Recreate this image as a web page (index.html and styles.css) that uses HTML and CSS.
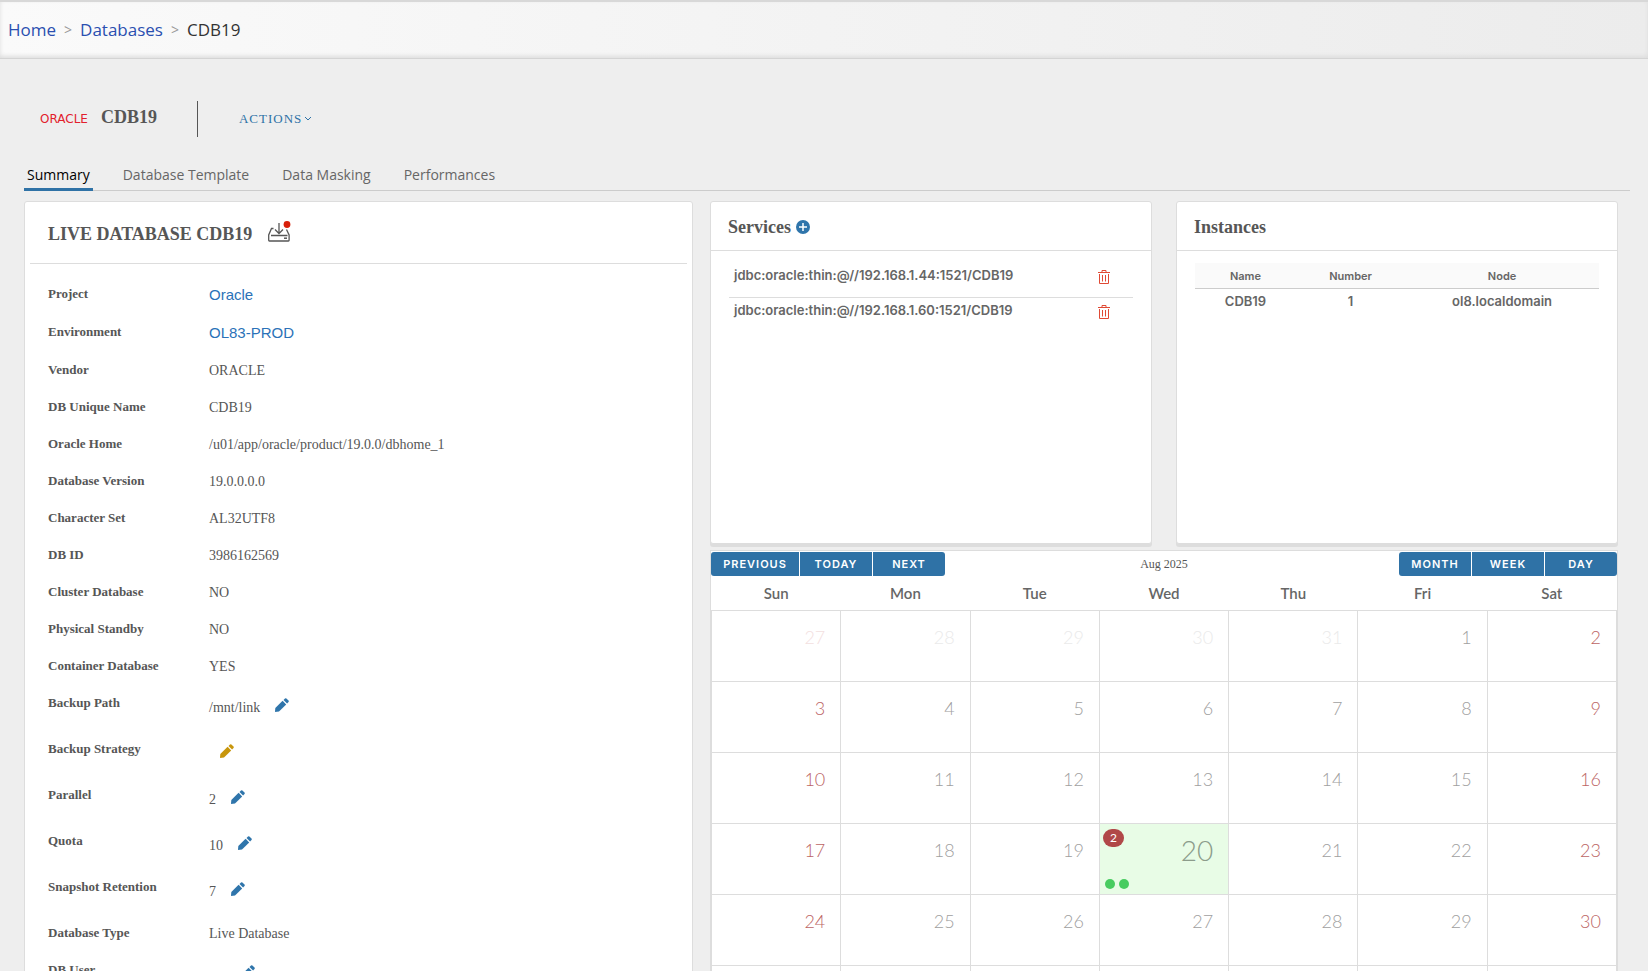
FILE: index.html
```
<!DOCTYPE html>
<html lang="en">
<head>
  <meta charset="UTF-8">
  <title>CDB19 - Databases</title>
  <link rel="stylesheet" href="styles.css">
</head>
<body>

  <!-- Shared icons -->
  <svg class="sprite" aria-hidden="true">
    <symbol id="pencil" viewBox="0 0 14 14">
      <path d="M0 14 L0.3 10 L7.6 2.8 L11.2 6.400 L4 13.500 Z"/>
      <path d="M8.500 1.900 L10 0.500 Q10.700 -0.200 11.400 0.500 L13.500 2.600 Q14.200 3.300 13.500 4 L12.100 5.500 Z"/>
    </symbol>
    <symbol id="trash" viewBox="0 0 12 14">
      <path d="M0 2.5h12M4 2.500v-2h4v2M1.500 4v9.500h9V4M4.500 5v6.500M7.500 5v6.500" fill="none" stroke="currentColor"/>
    </symbol>
  </svg>

  <nav class="breadcrumb">
    <a href="#">Home</a>
    <span class="sep">&gt;</span>
    <a href="#">Databases</a>
    <span class="sep">&gt;</span>
    <span class="current">CDB19</span>
  </nav>

  <header class="title-bar">
    <span class="logo">ORACLE</span>
    <h1>CDB19</h1>
    <button class="actions">ACTIONS<svg width="8" height="6" viewBox="0 0 8 6"><path d="M1 1l3 3 3-3" fill="none" stroke="currentColor"/></svg></button>
  </header>

  <div class="tabs" role="tablist">
    <button class="tab active" role="tab" aria-selected="true">Summary</button>
    <button class="tab" role="tab">Database Template</button>
    <button class="tab" role="tab">Data Masking</button>
    <button class="tab" role="tab">Performances</button>
  </div>

  <main class="content">

    <!-- Database details -->
    <section class="card details">
      <div class="details-head">
        <h2>LIVE DATABASE CDB19</h2>
        <svg width="24" height="22" viewBox="0 0 24 22" fill="none">
          <path d="M6.500 7.500H4.500L1.700 14v5.300q0 .7.700.7h19q.7 0 .7-.7V14L19.500 8.500M4 14.500h16.500" stroke="#565656" stroke-width="1.300"/>
          <path d="M12 2v10M8 8.500l4 4 4-4" stroke="#565656" stroke-width="1.300"/>
          <path d="M17 17.200h3" stroke="#565656" stroke-width="1.500"/>
          <circle cx="20" cy="3.500" r="3.400" fill="#d8200a"/>
        </svg>
      </div>
      <dl class="rows">
        <div class="row link"><dt>Project</dt><dd><a href="#">Oracle</a></dd></div>
        <div class="row link"><dt>Environment</dt><dd><a href="#">OL83-PROD</a></dd></div>
        <div class="row"><dt>Vendor</dt><dd>ORACLE</dd></div>
        <div class="row"><dt>DB Unique Name</dt><dd>CDB19</dd></div>
        <div class="row"><dt>Oracle Home</dt><dd>/u01/app/oracle/product/19.0.0/dbhome_1</dd></div>
        <div class="row"><dt>Database Version</dt><dd>19.0.0.0.0</dd></div>
        <div class="row"><dt>Character Set</dt><dd>AL32UTF8</dd></div>
        <div class="row"><dt>DB ID</dt><dd>3986162569</dd></div>
        <div class="row"><dt>Cluster Database</dt><dd>NO</dd></div>
        <div class="row"><dt>Physical Standby</dt><dd>NO</dd></div>
        <div class="row"><dt>Container Database</dt><dd>YES</dd></div>
        <div class="row edit"><dt>Backup Path</dt><dd>/mnt/link <button class="pen" aria-label="Edit backup path"><svg><use href="#pencil"/></svg></button></dd></div>
        <div class="row edit"><dt>Backup Strategy</dt><dd><button class="pen warn" aria-label="Edit backup strategy"><svg><use href="#pencil"/></svg></button></dd></div>
        <div class="row edit"><dt>Parallel</dt><dd>2 <button class="pen" aria-label="Edit parallel"><svg><use href="#pencil"/></svg></button></dd></div>
        <div class="row edit"><dt>Quota</dt><dd>10 <button class="pen" aria-label="Edit quota"><svg><use href="#pencil"/></svg></button></dd></div>
        <div class="row edit"><dt>Snapshot Retention</dt><dd>7 <button class="pen" aria-label="Edit snapshot retention"><svg><use href="#pencil"/></svg></button></dd></div>
        <div class="row"><dt>Database Type</dt><dd>Live Database</dd></div>
        <div class="row edit"><dt>DB User</dt><dd>sys <button class="pen" aria-label="Edit user"><svg><use href="#pencil"/></svg></button></dd></div>
      </dl>
    </section>

    <div class="side">
      <div class="cards">
        <section class="card small">
          <div class="card-head">
            <h2>Services</h2>
            <button class="add" aria-label="Add service">
              <svg width="14" height="14" viewBox="0 0 14 14"><circle cx="7" cy="7" r="7" fill="#2f75ab"/><path d="M7 3v8M3 7h8" stroke="#fff" stroke-width="1.500"/></svg>
            </button>
          </div>
          <ul class="services">
            <li>jdbc:oracle:thin:@//192.168.1.44:1521/CDB19 <button class="del" aria-label="Delete service"><svg><use href="#trash"/></svg></button></li>
            <li>jdbc:oracle:thin:@//192.168.1.60:1521/CDB19 <button class="del" aria-label="Delete service"><svg><use href="#trash"/></svg></button></li>
          </ul>
        </section>

        <section class="card small">
          <div class="card-head">
            <h2>Instances</h2>
          </div>
          <table class="instances">
            <thead>
              <tr><th class="c-name">Name</th><th class="c-num">Number</th><th>Node</th></tr>
            </thead>
            <tbody>
              <tr><td>CDB19</td><td>1</td><td>ol8.localdomain</td></tr>
            </tbody>
          </table>
        </section>
      </div>

      <!-- Calendar -->
      <section class="calendar">
        <div class="cal-bar">
          <div class="btn-group">
            <button class="wide">PREVIOUS</button><button>TODAY</button><button>NEXT</button>
          </div>
          <span class="cal-title">Aug 2025</span>
          <div class="btn-group right">
            <button>MONTH</button><button>WEEK</button><button>DAY</button>
          </div>
        </div>
        <table class="month">
          <thead>
            <tr><th>Sun</th><th>Mon</th><th>Tue</th><th>Wed</th><th>Thu</th><th>Fri</th><th>Sat</th></tr>
          </thead>
          <tbody>
            <tr><td class="we out">27</td><td class="out">28</td><td class="out">29</td><td class="out">30</td><td class="out">31</td><td>1</td><td class="we">2</td></tr>
            <tr><td class="we">3</td><td>4</td><td>5</td><td>6</td><td>7</td><td>8</td><td class="we">9</td></tr>
            <tr><td class="we">10</td><td>11</td><td>12</td><td>13</td><td>14</td><td>15</td><td class="we">16</td></tr>
            <tr><td class="we">17</td><td>18</td><td>19</td><td class="today">20<span class="badge">2</span><span class="dots"><i></i><i></i></span></td><td>21</td><td>22</td><td class="we">23</td></tr>
            <tr><td class="we">24</td><td>25</td><td>26</td><td>27</td><td>28</td><td>29</td><td class="we">30</td></tr>
            <tr><td class="we">31</td><td class="out">1</td><td class="out">2</td><td class="out">3</td><td class="out">4</td><td class="out">5</td><td class="we out">6</td></tr>
          </tbody>
        </table>
      </section>
    </div>
  </main>

</body>
</html>
```
FILE: styles.css
```
* {
  box-sizing: border-box;
}

body {
  margin: 0;
  background: #eee;
  color: #565656;
  font-family: "Liberation Serif", serif;
  font-size: 14px;
}

h1, h2, dl, dd, ul {
  margin: 0;
  padding: 0;
}

button {
  padding: 0;
  border: none;
  background: none;
  font: inherit;
  color: inherit;
  cursor: pointer;
}

a {
  text-decoration: none;
}

.sprite {
  display: none;
}

/* breadcrumb */
.breadcrumb {
  display: flex;
  align-items: center;
  gap: 8px;
  height: 59px;
  padding: 0 8px 2px;
  border-top: 2px solid #d8d8d8;
  border-bottom: 1px solid #d4d4d4;
  background: linear-gradient(to right, #fafafa, #ececec);
  box-shadow: inset 0 -2px 4px #ddd;
  font-family: "Open Sans", sans-serif;
  font-size: 17px;
}

.breadcrumb a {
  color: #2a4fb0;
}

.breadcrumb .sep {
  color: #999;
  font-size: 14px;
}

.breadcrumb .current {
  color: #333;
}

/* title */
.title-bar {
  display: flex;
  align-items: center;
  height: 38px;
  margin-top: 41px;
  padding-left: 40px;
}

.logo {
  color: #e2202c;
  font-family: "DejaVu Sans", sans-serif;
  font-size: 12px;
}

h1 {
  margin-left: 13px;
  padding-bottom: 4px;
  font-size: 18px;
  line-height: 24px;
}

.actions {
  height: 36px;
  margin-left: 40px;
  padding-left: 41px;
  border-left: 1px solid #565656;
  color: #2f72a6;
  font-size: 13px;
  letter-spacing: 1px;
}

.actions svg {
  margin: 0 0 1px 2px;
}

/* tabs */
.tabs {
  display: flex;
  gap: 27px;
  margin: 26px 18px 10px 24px;
  border-bottom: 1px solid #ccc;
}

.tab {
  height: 27px;
  margin-bottom: -1px;
  padding: 0 3px 3px;
  border-bottom: 3px solid transparent;
  color: #666;
  font-family: "Open Sans", sans-serif;
  font-size: 14px;
}

.tab.active {
  border-color: #2f72a6;
  color: #000;
}

/* layout */
.content {
  display: grid;
  grid-template-columns: 14fr 19fr;
  align-items: start;
  gap: 17px;
  padding: 0 30px 24px 24px;
}

.card {
  border: 1px solid #ddd;
  border-radius: 3px;
  background: #fff;
  box-shadow: 0 3px 0 #ddd;
}

h2 {
  font-size: 18px;
  line-height: 24px;
}

.details-head {
  display: flex;
  align-items: center;
  gap: 15px;
  height: 62px;
  margin: 0 5px;
  padding: 2px 0 0 18px;
  border-bottom: 1px solid #ddd;
}

.details-head svg {
  margin-bottom: 4px;
}

.rows {
  padding: 18px 24px 0 23px;
}

.row {
  display: flex;
  height: 37px;
  padding-top: 2px;
  line-height: 20px;
}

.row dt {
  width: 161px;
  font-size: 13px;
  font-weight: bold;
}

.row dd {
  padding-top: 1px;
}

.row.link {
  height: 38px;
}

.row a {
  color: #2b72b8;
  font-family: "Liberation Sans", sans-serif;
  font-size: 15px;
}

.row.edit {
  height: 46px;
}

.row.edit dd {
  padding-top: 5px;
}

.pen {
  margin-left: 11px;
}

.pen svg {
  width: 14px;
  height: 14px;
  fill: #2f75ab;
}

.pen.warn svg {
  fill: #c8960c;
}

/* services and instances */
.cards {
  display: grid;
  grid-template-columns: 1fr 1fr;
  gap: 24px;
  margin-bottom: 6px;
}

.small {
  height: 343px;
}

.card-head {
  display: flex;
  align-items: center;
  gap: 5px;
  height: 49px;
  padding: 1px 0 0 17px;
  border-bottom: 1px solid #ddd;
}

.add svg {
  display: block;
}

.services {
  margin: 11px 18px 0;
  list-style: none;
  font-family: Inter, sans-serif;
  font-size: 13px;
  font-weight: 600;
}

.services li {
  display: flex;
  align-items: center;
  justify-content: space-between;
  height: 35px;
  padding: 0 23px 10px 5px;
  color: #666;
}

.services li + li {
  border-top: 1px solid #ddd;
}

.del {
  margin-top: 4px;
  color: #e04a35;
}

.del svg {
  display: block;
  width: 12px;
  height: 14px;
}

.instances {
  width: calc(100% - 36px);
  margin: 12px 18px;
  border-collapse: collapse;
  table-layout: fixed;
  font-family: Inter, sans-serif;
  font-size: 13px;
  font-weight: 600;
  color: #666;
  text-align: center;
}

.instances th {
  height: 25px;
  padding: 1px 0 0;
  border-bottom: 1px solid #ccc;
  background: #fafafa;
  font-size: 11px;
  font-weight: 600;
}

.instances td {
  height: 25px;
  padding: 0;
}

.c-name {
  width: 25%;
}

.c-num {
  width: 27%;
}

/* calendar */
.calendar {
  border: 1px solid #ddd;
  background: #fff;
}

.cal-bar {
  display: grid;
  grid-template-columns: 1fr auto 1fr;
  align-items: center;
  padding-top: 1px;
  font-size: 12px;
}

.btn-group {
  display: flex;
  gap: 1px;
}

.btn-group.right {
  justify-content: flex-end;
}

.btn-group button {
  width: 72px;
  height: 24px;
  background: #2f72a6;
  color: #fff;
  font-family: Inter, sans-serif;
  font-size: 11px;
  font-weight: 600;
  letter-spacing: 1px;
}

.btn-group .wide {
  width: 88px;
}

.btn-group button:first-child {
  border-radius: 3px 0 0 3px;
}

.btn-group button:last-child {
  border-radius: 0 3px 3px 0;
}

.month {
  width: 100%;
  border-collapse: collapse;
  table-layout: fixed;
  font-family: Lato, sans-serif;
}

.month th {
  height: 34px;
  padding: 0;
  color: #666;
  font-size: 15px;
  font-weight: 600;
}

.month td {
  position: relative;
  height: 71px;
  padding: 15px 15px 0 0;
  border: 1px solid #ddd;
  color: #a0a0a0;
  font-size: 18px;
  font-weight: 300;
  line-height: 22px;
  text-align: right;
  vertical-align: top;
}

.month .we {
  color: #bc6464;
}

.month .out {
  color: #eaeaea;
}

.month .we.out {
  color: #f3e0e0;
}

.month .today {
  background: #e8fce6;
  color: #8c9c8b;
  font-size: 28px;
}

.badge {
  position: absolute;
  top: 5px;
  left: 3px;
  width: 21px;
  height: 18px;
  border-radius: 9px;
  background: #b04848;
  color: #fff;
  font-size: 12px;
  font-weight: 400;
  line-height: 18px;
  text-align: center;
}

.dots {
  position: absolute;
  bottom: 5px;
  left: 5px;
  display: flex;
  gap: 4px;
}

.dots i {
  width: 10px;
  height: 10px;
  border-radius: 50%;
  background: #48cc60;
}
```
